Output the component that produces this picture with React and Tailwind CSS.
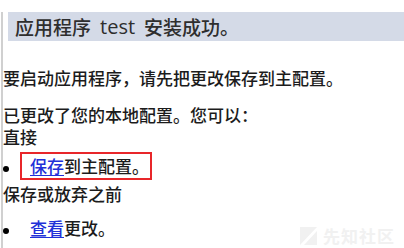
import React from 'react'

const font = { fontFamily: '"Noto Sans CJK SC", "Noto Sans", sans-serif' }

const Bullet = () => (
  <span className="w-[6px] h-[6px] rounded-full bg-black shrink-0 mt-[6px]" />
)

export default function App() {
  return (
    <div
      className="relative w-[404px] h-[248px] bg-white overflow-hidden text-[#1c1c1c] text-[17px] font-medium"
      style={font}
    >
      <div className="ml-[1px] h-full border-l-2 border-[#d0d0d0]">
        {/* header bar */}
        <div className="mt-[12px] ml-[5px] h-[29px] bg-[#d4dae7] pl-[7px] text-[19px] leading-[29px] text-[#2e2e2e] flex">
          <span>应用程序</span>
          <span className="mx-[9px] font-['Open_Sans',sans-serif] text-[20px] font-medium">test</span>
          <span>安装成功。</span>
        </div>

        <p className="mt-[26px] leading-[22px]">要启动应用程序，请先把更改保存到主配置。</p>

        <p className="mt-[15px] leading-[22px]">已更改了您的本地配置。您可以：</p>
        <div className="leading-[22px]">直接</div>

        <ul className="mt-[4px]">
          <li className="flex items-center">
            <Bullet />
            <span className="ml-[11px] h-[28px] w-[132px] border-2 border-[#e8262a] pl-[8px] flex items-center">
              <a href="#" className="text-[#2230d8] underline underline-offset-2">保存</a>
              <span>到主配置。</span>
            </span>
          </li>
        </ul>

        <div className="mt-[3px] leading-[22px]">保存或放弃之前</div>

        <ul className="mt-[12px]">
          <li className="flex items-center leading-[22px]">
            <Bullet />
            <span className="ml-[21px]">
              <a href="#" className="text-[#2230d8] underline underline-offset-2">查看</a>
              更改。
            </span>
          </li>
        </ul>
      </div>

      {/* watermark */}
      <div className="absolute left-[300px] top-[226px] flex items-center gap-[6px] text-[#f1f1f1]">
        <svg width="17" height="18" viewBox="0 0 17 18">
          <path d="M0 0h17L0 18z" fill="#f1f1f1" />
          <path d="M17 4v14H4z" fill="#f1f1f1" />
        </svg>
        <span className="text-[17px] font-bold leading-[20px] tracking-[1px]">先知社区</span>
      </div>
    </div>
  )
}
